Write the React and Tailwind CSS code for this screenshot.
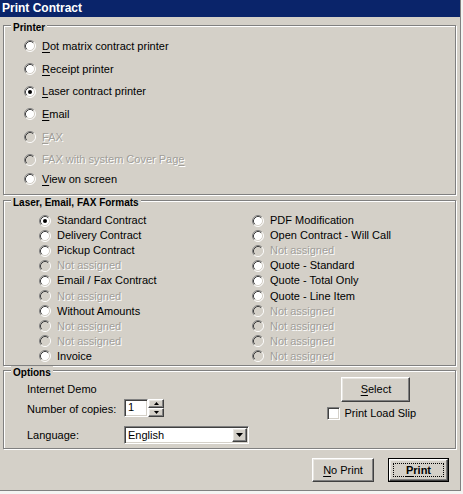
import React from 'react';

const Radio = ({ checked = false, disabled = false }) => (
  <svg width="12" height="12" viewBox="0 0 12 12" className="shrink-0">
    <circle cx="6" cy="6" r="5" fill={disabled ? '#d4d0c8' : '#ffffff'} />
    <path d="M2.11 9.89 A5.5 5.5 0 0 1 9.89 2.11" fill="none" stroke="#808080" strokeWidth="1" />
    <path d="M9.89 2.11 A5.5 5.5 0 0 1 2.11 9.89" fill="none" stroke="#ffffff" strokeWidth="1" />
    <path d="M2.82 9.18 A4.5 4.5 0 0 1 9.18 2.82" fill="none" stroke="#404040" strokeWidth="1" />
    <path d="M9.18 2.82 A4.5 4.5 0 0 1 2.82 9.18" fill="none" stroke="#d4d0c8" strokeWidth="1" />
    {checked && <circle cx="6" cy="6" r="2" fill={disabled ? '#808080' : '#000000'} />}
  </svg>
);

const disabledText = 'text-[#a09e99] [text-shadow:1px_1px_0_#ffffff]';

const RadioRow = ({ label, checked, disabled, className = '' }) => (
  <div className={`flex items-center gap-[6px] ${className}`}>
    <Radio checked={checked} disabled={disabled} />
    <span className={`leading-[13px] whitespace-nowrap ${disabled ? disabledText : 'text-black'}`}>{label}</span>
  </div>
);

const GroupBox = ({ title, className = '', children }) => (
  <div className={`relative border border-[#808080] shadow-[inset_1px_1px_0_#ffffff,1px_1px_0_#ffffff] ${className}`}>
    <span className="absolute left-[7px] -top-[5px] bg-[#d4d0c8] px-[2px] font-bold text-[10px] leading-[13px] text-black">{title}</span>
    {children}
  </div>
);

const raised = 'border border-t-white border-l-white border-r-[#404040] border-b-[#404040] shadow-[inset_-1px_-1px_0_#808080,inset_1px_1px_0_#e8e6e1]';
const sunken = 'border border-t-[#808080] border-l-[#808080] border-r-white border-b-white shadow-[inset_1px_1px_0_#404040,inset_-1px_-1px_0_#d4d0c8]';

const Key = ({ children }) => <span className="underline underline-offset-[2px]">{children}</span>;

const App = () => {
  const printers = [
    { label: <><Key>D</Key>ot matrix contract printer</> },
    { label: <><Key>R</Key>eceipt printer</> },
    { label: <><Key>L</Key>aser contract printer</>, checked: true },
    { label: <><Key>E</Key>mail</> },
    { label: <><Key>F</Key>AX</>, disabled: true },
    { label: <>FAX with system Cover Pag<Key>e</Key></>, disabled: true },
  ];

  const leftFormats = [
    { label: 'Standard Contract', checked: true },
    { label: 'Delivery Contract' },
    { label: 'Pickup Contract' },
    { label: 'Not assigned', disabled: true },
    { label: 'Email / Fax Contract' },
    { label: 'Not assigned', disabled: true },
    { label: 'Without Amounts' },
    { label: 'Not assigned', disabled: true },
    { label: 'Not assigned', disabled: true },
    { label: 'Invoice' },
  ];

  const rightFormats = [
    { label: 'PDF Modification' },
    { label: 'Open Contract - Will Call' },
    { label: 'Not assigned', disabled: true },
    { label: 'Quote - Standard' },
    { label: 'Quote - Total Only' },
    { label: 'Quote - Line Item' },
    { label: 'Not assigned', disabled: true },
    { label: 'Not assigned', disabled: true },
    { label: 'Not assigned', disabled: true },
    { label: 'Not assigned', disabled: true },
  ];

  return (
    <div className="w-[463px] h-[494px] bg-[#f4f4f2] font-['Liberation_Sans',Arial,sans-serif] text-[11px] text-black">
      <div className="w-[461px] h-[491px] bg-[#d4d0c8] border-r border-b border-[#808080] flex flex-col">

        {/* Title bar */}
        <div className="h-[17px] bg-[#0a246a] text-white font-bold text-[12px] leading-[17px] pl-[2px]">
          Print Contract
        </div>

        <div className="pl-[3px] pr-[4px] flex flex-col">

          {/* Printer */}
          <GroupBox title="Printer" className="mt-[8px] h-[170px]">
            <div className="pl-[20px] pt-[9px] flex flex-col">
              {printers.map((p, i) => (
                <RadioRow key={i} label={p.label} checked={p.checked} disabled={p.disabled} className="h-[22.7px]" />
              ))}
              <RadioRow label={<><Key>V</Key>iew on screen</>} className="h-[16px]" />
            </div>
          </GroupBox>

          {/* Formats */}
          <GroupBox title="Laser, Email, FAX Formats" className="mt-[5px] h-[166px]">
            <div className="pl-[35px] pt-[12px] grid grid-cols-[213px_1fr]">
              <div className="flex flex-col">
                {leftFormats.map((f, i) => (
                  <RadioRow key={i} label={f.label} checked={f.checked} disabled={f.disabled} className="h-[15.1px]" />
                ))}
              </div>
              <div className="flex flex-col">
                {rightFormats.map((f, i) => (
                  <RadioRow key={i} label={f.label} checked={f.checked} disabled={f.disabled} className="h-[15.1px]" />
                ))}
              </div>
            </div>
          </GroupBox>

          {/* Options */}
          <GroupBox title="Options" className="mt-[4px] h-[79px]">
            <div className="flex items-start">
              <div className="pl-[23px] pt-[12px] flex flex-col">
                <div className="h-[13px] leading-[13px]">Internet Demo</div>
                <div className="mt-[3px] h-[18px] flex items-center">
                  <span className="w-[97px] leading-[13px] pt-[3px]">Number of copies:</span>
                  <div className={`w-[24px] h-[18px] bg-white ${sunken} pl-[3px] leading-[15px]`}>1</div>
                  <div className="w-[16px] h-[18px] flex flex-col">
                    <div className={`h-[9px] ${raised} flex items-center justify-center`}>
                      <svg width="5" height="3" viewBox="0 0 5 3"><path d="M2.5 0 L5 3 L0 3 Z" fill="#000" /></svg>
                    </div>
                    <div className={`h-[9px] ${raised} flex items-center justify-center`}>
                      <svg width="5" height="3" viewBox="0 0 5 3"><path d="M0 0 L5 0 L2.5 3 Z" fill="#000" /></svg>
                    </div>
                  </div>
                </div>
                <div className="mt-[9px] h-[18px] flex items-center">
                  <span className="w-[97px] leading-[13px]">Language:</span>
                  <div className={`w-[125px] h-[18px] bg-white ${sunken} flex items-center justify-between pl-[3px] pr-[1px]`}>
                    <span className="leading-[13px]">English</span>
                    <div className={`w-[15px] h-[14px] bg-[#d4d0c8] ${raised} flex items-center justify-center`}>
                      <svg width="7" height="4" viewBox="0 0 7 4"><path d="M0 0 L7 0 L3.5 4 Z" fill="#000" /></svg>
                    </div>
                  </div>
                </div>
              </div>

              <div className="ml-auto mr-[39px] pt-[6px] flex flex-col items-start">
                <button className={`ml-[15px] w-[69px] h-[25px] bg-[#d4d0c8] ${raised} text-[11px]`}>
                  <Key>S</Key>elect
                </button>
                <div className="mt-[5px] flex items-center gap-[4px] pl-[1px]">
                  <div className={`w-[13px] h-[13px] bg-white ${sunken}`} />
                  <span className="leading-[13px] whitespace-nowrap">Print Load Slip</span>
                </div>
              </div>
            </div>
          </GroupBox>

          {/* Buttons */}
          <div className="mt-[9px] pr-[7px] flex justify-end gap-[14px]">
            <button className={`w-[62px] h-[24px] bg-[#d4d0c8] ${raised} text-[11px]`}>
              <Key>N</Key>o Print
            </button>
            <div className="w-[61px] h-[24px] border border-black">
              <button className={`relative w-full h-full bg-[#d4d0c8] ${raised} text-[11px] font-bold`}>
                <span className="absolute inset-[3px] border border-dotted border-black" />
                <Key>P</Key>rint
              </button>
            </div>
          </div>
        </div>
      </div>
    </div>
  );
};

export default App;
